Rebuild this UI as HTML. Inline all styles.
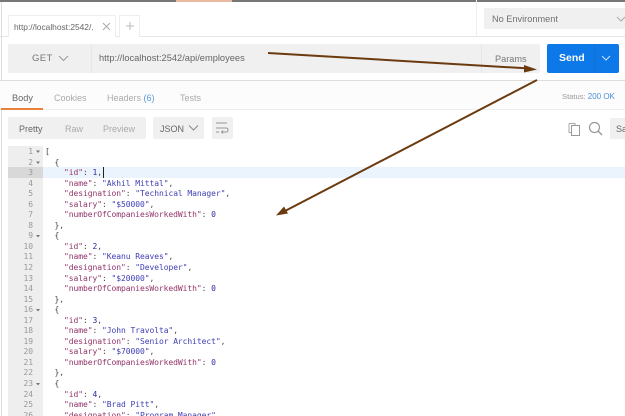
<!DOCTYPE html>
<html><head><meta charset="utf-8">
<style>
html,body{margin:0;padding:0;background:#fff}
#r{position:relative;width:625px;height:416px;overflow:hidden;background:#fff;font-family:"Liberation Sans",sans-serif;color:#666;filter:blur(.3px)}
#r div,#r span.a{position:absolute}
.t{white-space:nowrap;line-height:12px;height:12px}
.ln{position:absolute;left:8px;width:25px;text-align:right;font:8px/10px "DejaVu Sans Mono",monospace;letter-spacing:-.07px;color:#999;height:10px}
.cd{position:absolute;left:45px;font:8px/10px "DejaVu Sans Mono",monospace;letter-spacing:-.07px;color:#444;white-space:pre;height:10px}
.k{color:#92356a}.s{color:#3f3fb5}.n{color:#2a2aa0}
</style></head><body><div id="r">
<div style="left:0;top:0;width:625px;height:2px;background:#777"></div>
<div style="left:176px;top:0;width:56px;height:2px;background:#e9b9a0"></div>
<div style="left:1px;top:2px;width:1px;height:414px;background:#ddd"></div>

<div style="left:0;top:36px;width:625px;height:1px;background:#e6e6e6"></div>
<div style="left:8px;top:15px;width:108px;height:22px;background:#fff;border:1px solid #eee;border-bottom:none;box-sizing:border-box"></div>
<div class="t" style="left:14px;top:21px;font-size:8.4px;color:#666;width:80px;overflow:hidden">http://localhost:2542/..</div>
<svg style="position:absolute;left:101px;top:21px" width="11" height="11"><path d="M2 2L9 9M9 2L2 9" stroke="#aaa" stroke-width="1"/></svg>
<div style="left:119px;top:15px;width:21px;height:22px;background:#fff;border:1px solid #eee;border-bottom:none;box-sizing:border-box"></div>
<svg style="position:absolute;left:125px;top:21px" width="10" height="10"><path d="M5 1V9M1 5H9" stroke="#bbb" stroke-width="1"/></svg>
<div style="left:476px;top:0;width:1px;height:36px;background:#eee"></div>
<div style="left:484px;top:8px;width:141px;height:21px;background:#f0f0f0;border-radius:2px"></div>
<div class="t" style="left:492px;top:13px;font-size:9.2px;color:#707070">No Environment</div>
<svg style="position:absolute;left:616px;top:15px" width="9" height="8"><path d="M1 2L5 6L9 2" fill="none" stroke="#aaa" stroke-width="1"/></svg>

<div style="left:8px;top:44px;width:532px;height:29px;background:#f0f0f0;border-radius:2px"></div>
<div style="left:91px;top:44px;width:1px;height:29px;background:#e6e6e6"></div>
<div style="left:481px;top:44px;width:1px;height:29px;background:#e6e6e6"></div>
<div class="t" style="left:32px;top:53px;font-size:9.6px;color:#777;letter-spacing:.3px">GET</div>
<svg style="position:absolute;left:58px;top:54px" width="11" height="9"><path d="M1 2L5.5 6.5L10 2" fill="none" stroke="#999" stroke-width="1"/></svg>
<div class="t" style="left:99px;top:52px;font-size:9.3px;color:#666">http://localhost:2542/api/employees</div>
<div class="t" style="left:495px;top:53px;font-size:9.2px;color:#777">Params</div>
<div style="left:547px;top:44px;width:72px;height:29px;background:#0d78e8;border-radius:2px"></div>
<div style="left:594px;top:44px;width:1px;height:29px;background:#1a6fc9"></div>
<div class="t" style="left:559px;top:52px;font-size:10.5px;font-weight:bold;color:#fff">Send</div>
<svg style="position:absolute;left:601px;top:54px" width="11" height="8"><path d="M1 2L5 6L9 2" fill="none" stroke="#cfe2fa" stroke-width="1"/></svg>

<div style="left:0;top:80px;width:625px;height:1px;background:#ddd"></div>
<div style="left:0;top:81px;width:625px;height:28px;background:#fcfcfc"></div>
<div style="left:0;top:109px;width:625px;height:1px;background:#eee"></div>
<div class="t" style="left:12px;top:92px;font-size:9.2px;color:#666">Body</div>
<div style="left:1px;top:108px;width:42px;height:2px;background:#e8813c"></div>
<div class="t" style="left:54px;top:92px;font-size:9px;color:#aaa">Cookies</div>
<div class="t" style="left:107px;top:92px;font-size:9px;color:#aaa">Headers <span style="color:#5a9ade">(6)</span></div>
<div class="t" style="left:180px;top:92px;font-size:9px;color:#aaa">Tests</div>
<div class="t" style="left:562px;top:91px;font-size:7.6px;color:#999">Status: <span style="color:#4a90d9;font-size:8px">200 OK</span></div>

<div style="left:8px;top:117px;width:138px;height:22px;background:#f0f0f0;border-radius:2px"></div>
<div class="t" style="left:19px;top:123px;font-size:9px;color:#666">Pretty</div>
<div class="t" style="left:65px;top:123px;font-size:9px;color:#aaa">Raw</div>
<div class="t" style="left:103px;top:123px;font-size:9px;color:#aaa">Preview</div>
<div style="left:153px;top:117px;width:51px;height:22px;background:#f0f0f0;border-radius:2px"></div>
<div class="t" style="left:160px;top:123px;font-size:9px;color:#666">JSON</div>
<svg style="position:absolute;left:188px;top:124px" width="11" height="8"><path d="M1 1.5L5.5 6L10 1.5" fill="none" stroke="#888" stroke-width="1"/></svg>
<div style="left:212px;top:117px;width:21px;height:22px;background:#f0f0f0;border-radius:2px"></div>
<svg style="position:absolute;left:215px;top:121px" width="15" height="14"><path d="M1 2H12M1 7H11Q13 7 13 9T11 11H7M1 11H4M8 9.5L6.5 11L8 12.5" fill="none" stroke="#999" stroke-width="1"/></svg>
<svg style="position:absolute;left:567px;top:122px" width="14" height="14"><path d="M2 1.5H8V3.5M2 1.5V10.5H4" fill="none" stroke="#aaa" stroke-width="1"/><rect x="4.5" y="3.5" width="8" height="10" fill="#fff" stroke="#999"/></svg>
<svg style="position:absolute;left:588px;top:121px" width="15" height="15"><circle cx="6.5" cy="6.5" r="5" fill="none" stroke="#999" stroke-width="1.2"/><path d="M10 10L14 14" stroke="#999" stroke-width="1.4"/></svg>
<div style="left:610px;top:118px;width:15px;height:21px;background:#f0f0f0"></div>
<div class="t" style="left:616px;top:123px;font-size:9px;color:#666">Sa</div>

<div style="left:8px;top:146px;width:35px;height:270px;background:#eee"></div>
<div style="left:43px;top:167px;width:582px;height:11px;background:#ebf4fc"></div>
<div style="left:8px;top:167px;width:35px;height:11px;background:#d8d8d8"></div>
<div style="left:103px;top:167px;width:1px;height:11px;background:#222"></div>

<div class="ln" style="top:147px">1</div><div class="cd" style="top:147px">[</div>
<div class="ln" style="top:158px">2</div><div class="cd" style="top:158px">  {</div>
<div class="ln" style="top:168px">3</div><div class="cd" style="top:168px">    <span class="k">"id"</span>: <span class="n">1</span>,</div>
<div class="ln" style="top:179px">4</div><div class="cd" style="top:179px">    <span class="k">"name"</span>: <span class="s">"Akhil Mittal"</span>,</div>
<div class="ln" style="top:189px">5</div><div class="cd" style="top:189px">    <span class="k">"designation"</span>: <span class="s">"Technical Manager"</span>,</div>
<div class="ln" style="top:200px">6</div><div class="cd" style="top:200px">    <span class="k">"salary"</span>: <span class="s">"$50000"</span>,</div>
<div class="ln" style="top:210px">7</div><div class="cd" style="top:210px">    <span class="k">"numberOfCompaniesWorkedWith"</span>: <span class="n">0</span></div>
<div class="ln" style="top:221px">8</div><div class="cd" style="top:221px">  },</div>
<div class="ln" style="top:231px">9</div><div class="cd" style="top:231px">  {</div>
<div class="ln" style="top:242px">10</div><div class="cd" style="top:242px">    <span class="k">"id"</span>: <span class="n">2</span>,</div>
<div class="ln" style="top:252px">11</div><div class="cd" style="top:252px">    <span class="k">"name"</span>: <span class="s">"Keanu Reaves"</span>,</div>
<div class="ln" style="top:263px">12</div><div class="cd" style="top:263px">    <span class="k">"designation"</span>: <span class="s">"Developer"</span>,</div>
<div class="ln" style="top:274px">13</div><div class="cd" style="top:274px">    <span class="k">"salary"</span>: <span class="s">"$20000"</span>,</div>
<div class="ln" style="top:284px">14</div><div class="cd" style="top:284px">    <span class="k">"numberOfCompaniesWorkedWith"</span>: <span class="n">0</span></div>
<div class="ln" style="top:295px">15</div><div class="cd" style="top:295px">  },</div>
<div class="ln" style="top:305px">16</div><div class="cd" style="top:305px">  {</div>
<div class="ln" style="top:316px">17</div><div class="cd" style="top:316px">    <span class="k">"id"</span>: <span class="n">3</span>,</div>
<div class="ln" style="top:326px">18</div><div class="cd" style="top:326px">    <span class="k">"name"</span>: <span class="s">"John Travolta"</span>,</div>
<div class="ln" style="top:337px">19</div><div class="cd" style="top:337px">    <span class="k">"designation"</span>: <span class="s">"Senior Architect"</span>,</div>
<div class="ln" style="top:347px">20</div><div class="cd" style="top:347px">    <span class="k">"salary"</span>: <span class="s">"$70000"</span>,</div>
<div class="ln" style="top:358px">21</div><div class="cd" style="top:358px">    <span class="k">"numberOfCompaniesWorkedWith"</span>: <span class="n">0</span></div>
<div class="ln" style="top:368px">22</div><div class="cd" style="top:368px">  },</div>
<div class="ln" style="top:379px">23</div><div class="cd" style="top:379px">  {</div>
<div class="ln" style="top:390px">24</div><div class="cd" style="top:390px">    <span class="k">"id"</span>: <span class="n">4</span>,</div>
<div class="ln" style="top:400px">25</div><div class="cd" style="top:400px">    <span class="k">"name"</span>: <span class="s">"Brad Pitt"</span>,</div>
<div class="ln" style="top:411px">26</div><div class="cd" style="top:411px">    <span class="k">"designation"</span>: <span class="s">"Program Manager"</span>,</div>

<svg style="position:absolute;left:0;top:0" width="625" height="416">
<g fill="#777"><path d="M36 150.5h4l-2 2.5zM36 161.500h4l-2 2.5zM36 235h4l-2 2.5zM36 309h4l-2 2.5zM36 383h4l-2 2.500z"/></g>
<path d="M268 53L530 68.500" stroke="#6b3a0f" stroke-width="2" fill="none"/>
<path d="M537 69.500L524 65L524 72.500Z" fill="#6b3a0f"/>
<path d="M537 80L285 211" stroke="#6b3a0f" stroke-width="2" fill="none"/>
<path d="M276 215.500L284 206.500L288 213.500Z" fill="#6b3a0f"/>
</svg>
</div></body></html>
